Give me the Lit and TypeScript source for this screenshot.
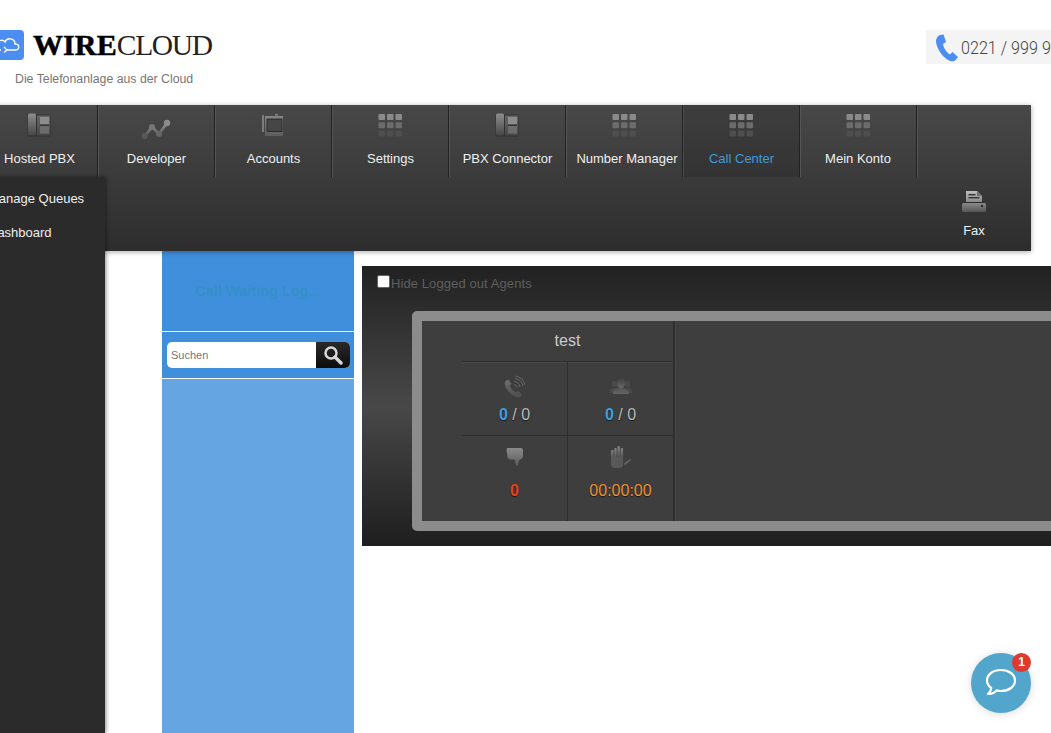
import { LitElement, css, html, svg } from "lit";
import { classMap } from "lit/directives/class-map.js";
import { customElement } from "lit/decorators.js";

const fade = (id: string, top = "#9a9a9a", bottom = "#3c3c3c") => svg`
  <defs>
    <linearGradient id=${id} x1="0" y1="0" x2="0" y2="1" gradientUnits="objectBoundingBox">
      <stop offset="0" stop-color=${top} />
      <stop offset="1" stop-color=${bottom} />
    </linearGradient>
  </defs>
`;

const pbxIcon = html`<svg width="24" height="24" viewBox="0 0 24 24">
  ${fade("pbx-a", "#8e8e8e", "#464646")}
  ${fade("pbx-b", "#666", "#484848")}
  <rect x="0.500" y="1.500" width="23" height="22" rx="1" fill="#303030" />
  <rect x="1" y="0.500" width="8" height="22" rx="1.500" fill="url(#pbx-a)" />
  <rect x="10" y="2.500" width="13" height="20" fill="url(#pbx-b)" />
  <rect x="13" y="4" width="9" height="7.500" fill="#8c8c8c" />
  <rect x="13" y="13" width="9" height="7.500" fill="#6c6c6c" />
  <rect x="13" y="11.500" width="9" height="1.500" fill="#333" />
</svg>`;

const devIcon = html`<svg class="low" width="30" height="24" viewBox="0 0 30 24">
  <defs>
    <linearGradient id="dev-a" gradientUnits="userSpaceOnUse" x1="0" y1="6" x2="0" y2="24">
      <stop offset="0" stop-color="#a0a0a0" />
      <stop offset="1" stop-color="#4a4a4a" />
    </linearGradient>
  </defs>
  <path d="M3 22 L11 12 L18 19 L26 8" fill="none" stroke="url(#dev-a)" stroke-width="2.600" />
  <circle cx="3.500" cy="21" r="3" fill="#585858" />
  <circle cx="11" cy="12" r="3" fill="#777" />
  <circle cx="18" cy="19" r="3" fill="#666" />
  <circle cx="26" cy="8" r="3.200" fill="#8c8c8c" />
</svg>`;

const accountsIcon = html`<svg width="24" height="24" viewBox="0 0 24 24">
  <defs>
    <linearGradient id="acc-a" gradientUnits="userSpaceOnUse" x1="0" y1="1" x2="0" y2="24">
      <stop offset="0" stop-color="#8a8a8a" />
      <stop offset="1" stop-color="#5a5a5a" />
    </linearGradient>
  </defs>
  <rect x="1" y="2" width="2" height="17" fill="#7c7c7c" />
  <rect x="4" y="3" width="18" height="20" fill="url(#acc-a)" />
  <rect x="6" y="6" width="15" height="12.500" fill="#464646" stroke="#222" stroke-width="0.800" />
  <rect x="14" y="1" width="3" height="1.500" fill="#888" />
</svg>`;

const gridColors = ["#8a8a8a", "#6c6c6c", "#4e4e4e"];
const gridIcon = html`<svg width="24" height="24" viewBox="0 0 24 24">
  ${gridColors.map((c, row) =>
    [0, 1, 2].map(
      (col) => svg`<rect x=${0.5 + col * 8.5} y=${1 + row * 8.2} width="6.500" height="6" rx="1" fill=${c} />`
    )
  )}
</svg>`;

const faxIcon = html`<svg width="26" height="24" viewBox="0 0 26 24">
  ${fade("fax-a", "#bdbdbd", "#8a8a8a")}
  ${fade("fax-b", "#8a8a8a", "#555")}
  <path d="M5 1 H16 L21 6 V12 H5 Z" fill="url(#fax-a)" />
  <path d="M16 1 V6 H21 Z" fill="#6e6e6e" />
  <rect x="7.500" y="4" width="7" height="1.400" fill="#333" />
  <rect x="7.500" y="7" width="11" height="1.400" fill="#333" />
  <rect x="3" y="12" width="20" height="1" fill="#2a2a2a" />
  <rect x="1" y="13" width="24" height="9" rx="1.500" fill="url(#fax-b)" />
  <circle cx="21" cy="16" r="1.200" fill="#2a2a2a" />
</svg>`;

const callIcon = html`<svg width="24" height="24" viewBox="0 0 24 24">
  ${fade("call-a", "#707070", "#4c4c4c")}
  <path d="M2.500 6 L5.500 4.500 L8.500 9 L6.800 10.500 C7.500 13 10 16 13 17.500 L14.700 15.800 L19 19.500 L17.500 22 C14.500 23.500 9.500 21 5.800 17 C2.500 13.500 0.500 8.500 2.500 6 Z" fill="url(#call-a)" />
  <g fill="none" stroke="#6a6a6a" stroke-width="0.900">
    <path d="M11 9.500 A3.500 3.500 0 0 1 14 12.500" />
    <path d="M11.500 6.500 A6.500 6.500 0 0 1 17 12" />
    <path d="M12 3.500 A9.500 9.500 0 0 1 20 11" />
    <path d="M12.500 1 A12 12 0 0 1 22 10" />
  </g>
</svg>`;

const agentsIcon = html`<svg width="24" height="20" viewBox="0 0 24 20">
  ${fade("agents-a", "#545454", "#666")}
  ${fade("agents-b", "#3c3c3c", "#6a6a6a")}
  <circle cx="5.500" cy="7" r="3" fill="#4a4a4a" />
  <circle cx="18.500" cy="7" r="3" fill="#4a4a4a" />
  <path d="M1 16 C1 12 3 11 6 11 H18 C21 11 23 12 23 16 Z" fill="#4c4c4c" />
  <ellipse cx="12" cy="6" rx="4" ry="5.500" fill="url(#agents-b)" />
  <path d="M4 17 C4 12.500 8 11.500 12 11.500 C16 11.500 20 12.500 20 17 Z" fill="url(#agents-a)" />
</svg>`;

const thumbIcon = html`<svg width="22" height="22" viewBox="0 0 22 22">
  ${fade("thumb-a", "#8a8a8a", "#5a5a5a")}
  <path d="M3 2 H17 C18.500 2 19 3 19 4.500 V10 C19 12 17 13.500 15.500 14 C14.500 15.500 14 18 13.800 20 C12.500 20.500 11.500 19 11.500 17 C11.500 15.500 11 14 10 13.500 H6.500 C5 13.500 4 12.500 3.500 11 L3 7 C2.500 5.500 2.500 3 3 2 Z" fill="url(#thumb-a)" />
</svg>`;

const handIcon = html`<svg width="22" height="24" viewBox="0 0 22 24">
  ${fade("hand-a", "#828282", "#505050")}
  <g fill="url(#hand-a)">
    <rect x="1" y="5" width="2.500" height="9" rx="1" />
    <rect x="4.200" y="3" width="2.500" height="11" rx="1" />
    <rect x="7.400" y="1" width="2.500" height="13" rx="1" />
    <rect x="10.600" y="3" width="2.500" height="11" rx="1" />
  </g>
  <path d="M1 12 H13 V19 C13 21.500 11.500 23 9 23 H5 C2.500 23 1 21.500 1 19 Z" fill="#585858" />
  <path d="M14 18 L20 14 L21 15 L15 20.500 Z" fill="#606060" />
</svg>`;

const navItems = [
  { label: "Hosted PBX", icon: pbxIcon, shift: 1 },
  { label: "Developer", icon: devIcon, shift: 1 },
  { label: "Accounts", icon: accountsIcon, shift: 1 },
  { label: "Settings", icon: gridIcon, shift: 1 },
  { label: "PBX Connector", icon: pbxIcon, shift: 1 },
  { label: "Number Manager", icon: gridIcon, shift: 6 },
  { label: "Call Center", icon: gridIcon, shift: 1, active: true },
  { label: "Mein Konto", icon: gridIcon, shift: 0 },
];

@customElement("app-root")
export class AppRoot extends LitElement {
  static styles = css`
    :host {
      display: block;
      position: relative;
      width: 1051px;
      height: 733px;
      overflow: hidden;
      background: #fff;
      font-family: "Liberation Sans", Arial, sans-serif;
    }

    .header {
      height: 105px;
      display: flex;
      justify-content: space-between;
      align-items: flex-start;
      box-sizing: border-box;
      padding-top: 30px;
    }

    .brand {
      display: flex;
      flex-direction: column;
    }

    .brand-row {
      display: flex;
      align-items: center;
      gap: 9px;
      height: 30px;
    }

    .brand-tile {
      width: 34px;
      height: 30px;
      margin-left: -10px;
      border-radius: 4px;
      background: #4b8df0;
      display: flex;
      align-items: center;
      justify-content: center;
    }

    .brand-name {
      font-family: "Liberation Serif", serif;
      font-size: 30px;
      line-height: 30px;
      color: #000;
      display: flex;
    }

    .brand-name b {
      font-weight: 700;
      letter-spacing: 0.1px;
      -webkit-text-stroke: 0.5px #000;
    }

    .brand-name span {
      letter-spacing: -1.3px;
      font-size: 29.5px;
      color: #222;
    }

    .tagline {
      margin: 12px 0 0 15px;
      font-size: 12.3px;
      line-height: 14px;
      color: #777;
    }

    .phone {
      width: 125px;
      height: 34px;
      background: #f4f4f4;
      display: flex;
      align-items: center;
      gap: 3px;
      padding-left: 9px;
      box-sizing: border-box;
      font-family: Roboto, sans-serif;
      font-weight: 300;
      font-size: 19px;
      color: #444;
      white-space: nowrap;
    }

    .phone svg {
      flex: none;
      margin-top: 2px;
    }

    .phone span {
      display: inline-block;
      transform: scaleX(0.85);
      transform-origin: left center;
    }

    .nav {
      width: 1050px;
      height: 146px;
      margin-left: -19px;
      background: linear-gradient(#484848, #2d2d2d);
      box-shadow: 0 1px 5px rgba(0, 0, 0, 0.35);
      position: relative;
      z-index: 2;
    }

    .nav-row {
      display: flex;
      height: 72px;
    }

    .nav-row.end {
      justify-content: flex-end;
    }

    .nav-item {
      width: 117px;
      flex: none;
      box-sizing: border-box;
      border-right: 1px solid #222;
      box-shadow: 1px 0 0 #555;
      display: flex;
      flex-direction: column;
      align-items: center;
      padding-top: 8px;
      font-size: 13px;
      line-height: 16px;
      color: #f0f0f0;
      white-space: nowrap;
    }

    .nav-item.fax {
      border-right: none;
      box-shadow: none;
      padding: 13px 0 0 3px;
    }

    .nav-item.fax .nav-icon {
      margin-bottom: 9px;
    }

    .nav-item.active {
      background: rgba(0, 0, 0, 0.13);
      color: #3f9bd8;
    }

    .nav-icon {
      height: 24px;
      display: flex;
      align-items: center;
      justify-content: center;
      margin-bottom: 14px;
    }

    .nav-icon svg.low {
      margin-top: 4px;
      overflow: visible;
    }

    .menu {
      position: absolute;
      left: -12px;
      top: 177px;
      width: 117px;
      bottom: 0;
      z-index: 3;
      background: #2b2b2b;
      box-shadow: 1px 0 4px rgba(0, 0, 0, 0.45);
      box-sizing: border-box;
      padding-top: 5px;
      font-size: 13px;
      color: #eee;
    }

    .menu div {
      height: 34px;
      line-height: 34px;
    }

    .content {
      display: flex;
      gap: 8px;
      padding-left: 162px;
      height: 482px;
    }

    .side {
      width: 192px;
      flex: none;
      display: flex;
      flex-direction: column;
      background: #65a6e2;
    }

    .side-title {
      height: 80px;
      background: #3f8fdc;
      display: flex;
      align-items: center;
      justify-content: center;
      font-size: 14.5px;
      font-weight: 700;
      color: #3490c8;
      border-bottom: 1px solid #fff;
      box-sizing: content-box;
    }

    .search-row {
      height: 46px;
      background: #3f8fdc;
      border-bottom: 1px solid #fff;
      display: flex;
      align-items: center;
      padding: 0 4px 0 5px;
    }

    .search {
      flex: 1;
      height: 26px;
      display: flex;
      border-radius: 5px;
      overflow: hidden;
      background: #fff;
    }

    .search span {
      flex: 1;
      padding-left: 4px;
      font-size: 11px;
      line-height: 26px;
      color: #777;
    }

    .search button {
      width: 34px;
      padding: 0;
      border: 0;
      background: linear-gradient(#2a2a2a, #0c0c0c);
      display: flex;
      align-items: center;
      justify-content: center;
    }

    .main {
      flex: 1;
      min-width: 0;
      height: 280px;
      margin-top: 15px;
      overflow: hidden;
      position: relative;
      background: linear-gradient(#212121, #484848 50%, #1e1e1e);
    }

    .hide {
      display: flex;
      align-items: center;
      height: 14px;
      padding: 10px 0 0 15px;
      font-size: 13px;
      letter-spacing: 0.09px;
      color: #5f5f5f;
    }

    .hide input {
      appearance: none;
      width: 13px;
      height: 13px;
      margin: -3px 1px 0 0;
      background: #fff;
      border: 1px solid #666;
      border-radius: 2px;
      box-sizing: border-box;
    }

    .board {
      margin: 21px -20px 0 50px;
      height: 200px;
      border: 10px solid #8c8c8c;
      border-radius: 5px;
      background: #3e3e3e;
      display: flex;
    }

    .queue {
      width: 253px;
      box-sizing: border-box;
      border-right: 2px solid #2e2e2e;
      padding-left: 40px;
      box-shadow: 1px 0 0 #484848;
    }

    .queue-name {
      height: 41px;
      border-bottom: 1px solid #2e2e2e;
      box-shadow: 0 1px 0 #484848;
      text-align: center;
      font-size: 16px;
      line-height: 39px;
      color: #ccc;
      box-sizing: border-box;
    }

    .stats {
      display: grid;
      grid-template-columns: 106px 1fr;
      grid-template-rows: 74px 85px;
    }

    .stat {
      display: flex;
      flex-direction: column;
      align-items: center;
      padding-top: 13px;
      box-sizing: border-box;
      font-size: 16px;
      line-height: 20px;
      color: #bbb;
      text-shadow: 0 1px 1px rgba(0, 0, 0, 0.6);
    }

    .stat:nth-child(odd) {
      border-right: 1px solid #2e2e2e;
    }

    .stat:nth-child(-n + 2) {
      border-bottom: 1px solid #2e2e2e;
    }

    .stat-icon {
      height: 24px;
      display: flex;
      align-items: center;
      margin-bottom: 6px;
    }

    .stat.low {
      padding-top: 9px;
    }

    .stat.low .stat-icon {
      margin-bottom: 12px;
    }

    .blue {
      color: #3f9fe2;
      font-weight: 700;
    }

    .red {
      color: #e8401f;
      font-weight: 700;
    }

    .orange {
      color: #ee9030;
    }

    .chat {
      position: absolute;
      left: 971px;
      top: 653px;
      width: 60px;
      height: 60px;
      border-radius: 50%;
      background: #52a6cb;
      box-shadow: 0 1px 8px rgba(0, 0, 0, 0.15);
      display: flex;
      align-items: center;
      justify-content: center;
      z-index: 4;
    }

    .chat-badge {
      position: absolute;
      right: 0;
      top: 0;
      width: 19px;
      height: 19px;
      border-radius: 50%;
      background: #e03a2e;
      color: #fff;
      font-size: 12px;
      font-weight: 700;
      line-height: 19px;
      text-align: center;
    }
  `;

  render() {
    return html`
      <div class="header">
        <div class="brand">
          <div class="brand-row">
            <div class="brand-tile">
              <svg width="28" height="18" viewBox="0 0 28 18" fill="none" stroke="#fff" stroke-width="1.300">
                <path d="M8 14 H4 C1 14 0 8 4.500 8 C5 4 10 3 12 6 C14 1 22 2 22 8 C27 8 27 14 22 14 H14" />
                <path d="M11 11 L14 14 L11 16.500" />
              </svg>
            </div>
            <div class="brand-name"><b>WIRE</b><span>CLOUD</span></div>
          </div>
          <div class="tagline">Die Telefonanlage aus der Cloud</div>
        </div>
        <div class="phone">
          <svg width="23" height="28" viewBox="0 0 23 28">
            <path d="M5 1 L8.500 0.500 L11 8 L8 10 C8.500 14 11.500 18.500 15 20.500 L17.500 18 L23 23 L20 26.500 C18 28 15 27.500 11.500 25 C6 21 1.500 13.500 1 7.500 C1 4.500 2.500 2 5 1 Z" fill="#4b8df0" />
          </svg>
          <span>0221 / 999 9</span>
        </div>
      </div>

      <div class="nav">
        <div class="nav-row">
          ${navItems.map(
            (item) => html`
              <div class=${classMap({ "nav-item": true, active: !!item.active })}>
                <div class="nav-icon">${item.icon}</div>
                <span style="margin-left: ${item.shift}px">${item.label}</span>
              </div>
            `
          )}
        </div>
        <div class="nav-row end">
          <div class="nav-item fax">
            <div class="nav-icon">${faxIcon}</div>
            Fax
          </div>
        </div>
      </div>

      <div class="menu">
        <div>Manage Queues</div>
        <div>Dashboard</div>
      </div>

      <div class="content">
        <div class="side">
          <div class="side-title">Call Waiting Log...</div>
          <div class="search-row">
            <div class="search">
              <span>Suchen</span>
              <button>
                <svg width="20" height="20" viewBox="0 0 20 20" fill="none" stroke="#d8d8d8">
                  <circle cx="8" cy="8" r="5.500" stroke-width="2.500" />
                  <path d="M12 12 L18 18" stroke-width="3.400" stroke-linecap="round" />
                </svg>
              </button>
            </div>
          </div>
        </div>

        <div class="main">
          <label class="hide"><input type="checkbox" />Hide Logged out Agents</label>
          <div class="board">
            <div class="queue">
              <div class="queue-name">test</div>
              <div class="stats">
                <div class="stat">
                  <div class="stat-icon">${callIcon}</div>
                  <div><span class="blue">0</span> / 0</div>
                </div>
                <div class="stat">
                  <div class="stat-icon">${agentsIcon}</div>
                  <div><span class="blue">0</span> / 0</div>
                </div>
                <div class="stat low">
                  <div class="stat-icon">${thumbIcon}</div>
                  <div class="red">0</div>
                </div>
                <div class="stat low">
                  <div class="stat-icon">${handIcon}</div>
                  <div class="orange">00:00:00</div>
                </div>
              </div>
            </div>
          </div>
        </div>
      </div>

      <div class="chat">
        <svg width="32" height="30" viewBox="0 0 32 30" fill="none" stroke="#fff" stroke-width="2.200" stroke-linejoin="round">
          <path d="M16 2 C24 2 30 6.500 30 12.500 C30 18.500 24 23 16 23 C14.500 23 13 22.800 11.500 22.400 C9.500 24.500 6.500 26 3 26 C5 24.500 6 22.500 6.200 20 C3.500 18 2 15.500 2 12.500 C2 6.500 8 2 16 2 Z" />
        </svg>
        <div class="chat-badge">1</div>
      </div>
    `;
  }
}
